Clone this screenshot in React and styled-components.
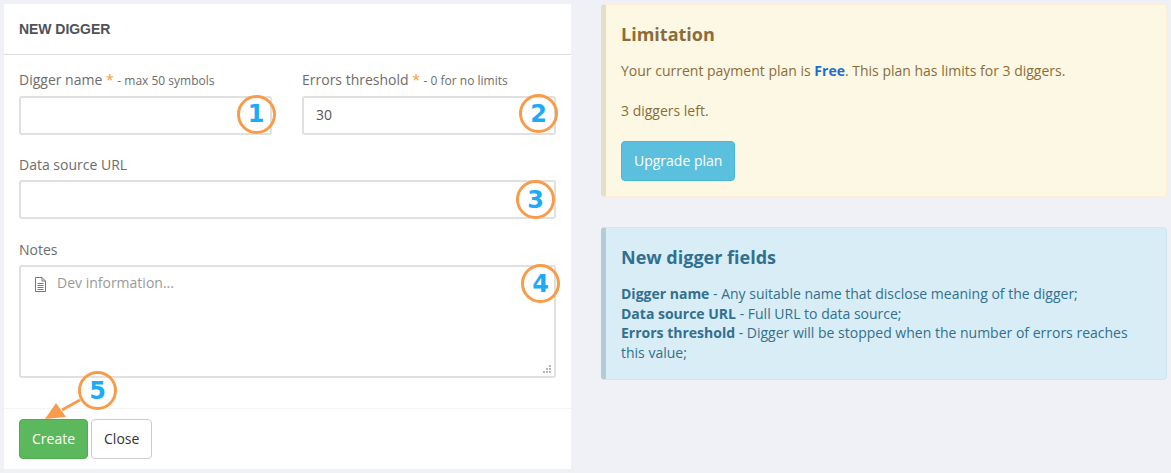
import React from "react";
import styled, { createGlobalStyle } from "styled-components";

const Global = createGlobalStyle`
  html, body { margin: 0; padding: 0; background: #eff1f7; }
  body { font-family: "Open Sans", "Liberation Sans", sans-serif; font-size: 14px; color: #6b6b6b; }
  * { box-sizing: border-box; }
`;

const Page = styled.div`
  width: 1171px;
  height: 473px;
  padding: 4px;
  display: grid;
  grid-template-columns: 567px 566px;
  column-gap: 30px;
  align-items: start;
  overflow: hidden;
`;

const Panel = styled.section`
  position: relative;
  height: 465px;
  background: #fff;
  display: flex;
  flex-direction: column;
`;

const PanelHeader = styled.header`
  height: 51px;
  border-bottom: 1px solid #dcdcdc;
  padding: 0 15px;
  display: flex;
  align-items: center;
  font-family: "Liberation Sans", Arial, sans-serif;
  font-weight: 700;
  font-size: 14px;
  letter-spacing: -0.05px;
  color: #4f5258;
`;

const Form = styled.div`
  flex: 1;
  padding: 14px 15px 0;
  display: flex;
  flex-direction: column;
`;

const Row = styled.div`
  display: grid;
  grid-template-columns: ${(p) => (p.$split ? "253px 254px" : "1fr")};
  column-gap: 30px;
  margin-bottom: ${(p) => p.$gap || 0}px;
`;

const Label = styled.label`
  display: block;
  height: ${(p) => p.$h || 27}px;
  line-height: 22px;
  font-size: 14px;
  color: #6d6d6d;
  white-space: nowrap;
`;

const Star = styled.span`
  color: #f89c3c;
`;

const Hint = styled.small`
  font-size: 12px;
  color: #6d6d6d;
`;

const Input = styled.input`
  display: block;
  width: 100%;
  height: 39px;
  padding: 0 12px 2px;
  border: 2px solid #e0e0e0;
  border-radius: 3px;
  outline: none;
  background: #fff;
  font: 14px "Open Sans", sans-serif;
  color: #555;
`;

const AreaWrap = styled.div`
  position: relative;
`;

const Area = styled.textarea`
  display: block;
  width: 100%;
  height: 113px;
  padding: 5px 12px 6px 36px;
  border: 2px solid #e0e0e0;
  border-radius: 3px;
  outline: none;
  background: #fff;
  font: 14px/22px "Open Sans", sans-serif;
  color: #555;
  resize: none;
  &::placeholder { color: #999; opacity: 1; }
`;

const AreaIcon = styled.svg`
  position: absolute;
  left: 15px;
  top: 12px;
  width: 13px;
  height: 15px;
`;

const Grip = styled.svg`
  position: absolute;
  right: 4px;
  bottom: 4px;
  width: 9px;
  height: 9px;
`;

const Footer = styled.footer`
  height: 61px;
  border-top: 1px solid #f4f4f4;
  padding: 10px 15px;
  display: flex;
  gap: 3px;
  align-items: flex-start;
`;

const Button = styled.button`
  height: 40px;
  padding: 0 ${(p) => p.$pad || 12}px 2px;
  border: 1px solid ${(p) => p.$border};
  border-radius: 4px;
  background: ${(p) => p.$bg};
  color: ${(p) => p.$color};
  font: 14px "Open Sans", sans-serif;
`;

const Column = styled.div`
  display: flex;
  flex-direction: column;
  gap: 30px;
`;

const Callout = styled.aside`
  height: ${(p) => p.$h}px;
  padding: 16px 15px 0 15px;
  background: ${(p) => p.$bg};
  border: 1px solid ${(p) => p.$line};
  border-left: 5px solid ${(p) => p.$edge};
  border-radius: 4px;
  color: ${(p) => p.$color};
  font-size: 14px;
  line-height: ${(p) => p.$lh}px;
`;

const CalloutTitle = styled.h4`
  margin: 0 0 13px;
  font-size: 18px;
  line-height: 27px;
  font-weight: 700;
`;

const Para = styled.p`
  margin: 0 0 ${(p) => p.$after || 0}px;
`;

const Free = styled.b`
  color: #1a6fd0;
`;

const UpgradeButton = styled(Button)`
  display: block;
`;

const Badge = styled.span`
  position: absolute;
  left: ${(p) => p.$x - 4 - 20}px;
  top: ${(p) => p.$y - 4 - 20}px;
  width: 39px;
  height: 39px;
  border: 3px solid #f89c4a;
  border-radius: 50%;
  display: flex;
  align-items: center;
  justify-content: center;
  font-family: "DejaVu Sans", sans-serif;
  font-weight: 700;
  font-size: 24px;
  line-height: 1;
  color: #1eaaf7;
`;

const Arrow = styled.svg`
  position: absolute;
  left: 38px;
  top: 390px;
  width: 50px;
  height: 34px;
`;

export default function App() {
  const gripDots = [[6, 0], [3, 3], [6, 3], [0, 6], [3, 6], [6, 6]];
  return (
    <>
      <Global />
      <Page>
        <Panel>
          <PanelHeader>NEW DIGGER</PanelHeader>
          <Form>
            <Row $split $gap={19}>
              <div>
                <Label>Digger name <Star>*</Star> <Hint>- max 50 symbols</Hint></Label>
                <Input />
              </div>
              <div>
                <Label>Errors threshold <Star>*</Star> <Hint>- 0 for no limits</Hint></Label>
                <Input defaultValue="30" />
              </div>
            </Row>
            <Row $gap={20}>
              <div>
                <Label $h={26}>Data source URL</Label>
                <Input />
              </div>
            </Row>
            <Row>
              <div>
                <Label $h={26}>Notes</Label>
                <AreaWrap>
                  <Area placeholder="Dev information..." />
                  <AreaIcon viewBox="0 0 13 15" fill="none" stroke="#777" strokeWidth="1">
                    <path d="M1.5 .5h6.5l3.5 3.5v10.5h-10z" />
                    <path d="M8 .5v3.5h3.5M3.5 6.5h6M3.5 8.5h6M3.5 10.5h6M3.5 12.5h6" />
                  </AreaIcon>
                  <Grip viewBox="0 0 9 9" fill="#b5b5b5">
                    {gripDots.map(([x, y]) => (
                      <rect key={`${x}-${y}`} x={x} y={y} width="2" height="2" />
                    ))}
                  </Grip>
                </AreaWrap>
              </div>
            </Row>
          </Form>
          <Footer>
            <Button $bg="#5cb85c" $border="#4cae4c" $color="#fff">Create</Button>
            <Button $bg="#fff" $border="#ccc" $color="#333">Close</Button>
          </Footer>
          <Badge $x={256.5} $y={114.5}>1</Badge>
          <Badge $x={539} $y={114}>2</Badge>
          <Badge $x={536} $y={200}>3</Badge>
          <Badge $x={541} $y={284}>4</Badge>
          <Badge $x={98} $y={391}>5</Badge>
          <Arrow viewBox="0 0 50 34">
            <path d="M38 6 L20 16" stroke="#f89c4a" strokeWidth="3" fill="none" />
            <path d="M3 25 L14 9 L24 23 Z" fill="#f89c4a" />
          </Arrow>
        </Panel>
        <Column>
          <Callout $h={193} $lh={20} $bg="#fdf8e3" $line="#fdeed3" $edge="#e2dfcb" $color="#8a6d3b">
            <CalloutTitle>Limitation</CalloutTitle>
            <Para $after={20}>Your current payment plan is <Free>Free</Free>. This plan has limits for 3 diggers.</Para>
            <Para $after={20}>3 diggers left.</Para>
            <UpgradeButton $bg="#5bc0de" $border="#46b8da" $color="#fff">Upgrade plan</UpgradeButton>
          </Callout>
          <Callout $h={153} $lh={19.6} $bg="#d9edf7" $line="#cfe7f3" $edge="#b3cbd7" $color="#31708f">
            <CalloutTitle>New digger fields</CalloutTitle>
            <Para><b>Digger name</b> - Any suitable name that disclose meaning of the digger;</Para>
            <Para><b>Data source URL</b> - Full URL to data source;</Para>
            <Para><b>Errors threshold</b> - Digger will be stopped when the number of errors reaches this value;</Para>
          </Callout>
        </Column>
      </Page>
    </>
  );
}
